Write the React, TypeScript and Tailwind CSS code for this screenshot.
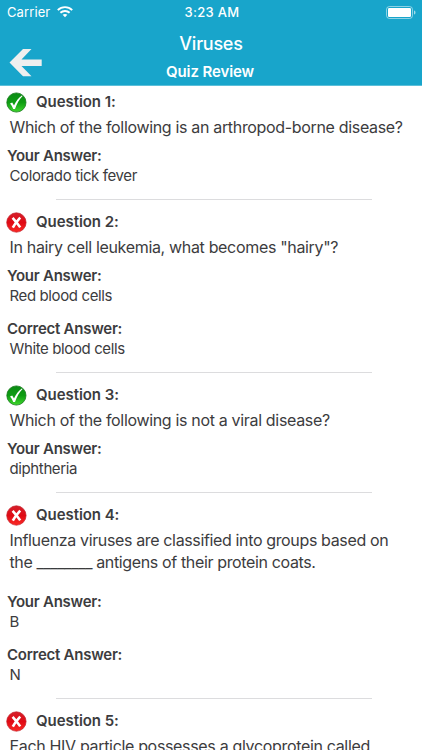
interface ReviewItem {
  id: number;
  text: string[];
  correct: boolean;
  answer?: string;
  correctAnswer?: string;
}

const items: ReviewItem[] = [
  {
    id: 1,
    text: ["Which of the following is an arthropod-borne disease?"],
    correct: true,
    answer: "Colorado tick fever",
  },
  {
    id: 2,
    text: ['In hairy cell leukemia, what becomes "hairy"?'],
    correct: false,
    answer: "Red blood cells",
    correctAnswer: "White blood cells",
  },
  {
    id: 3,
    text: ["Which of the following is not a viral disease?"],
    correct: true,
    answer: "diphtheria",
  },
  {
    id: 4,
    text: [
      "Influenza viruses are classified into groups based on",
      "the ________ antigens of their protein coats.",
    ],
    correct: false,
    answer: "B",
    correctAnswer: "N",
  },
  {
    id: 5,
    text: ["Each HIV particle possesses a glycoprotein called"],
    correct: false,
  },
];

export default function App() {
  return (
    <div className="flex h-[750px] w-[422px] flex-col overflow-hidden bg-white font-['Inter',sans-serif] text-[#3c3c3e]">
      <Header />
      <main className="min-h-0 flex-1 overflow-hidden pt-1">
        {items.map((item) => (
          <ReviewBlock key={item.id} item={item} />
        ))}
      </main>
    </div>
  );
}

function Header() {
  return (
    <header className="h-[86px] shrink-0 border-b border-[#5cbfd9] bg-[#18a5cb] text-white">
      <div className="grid h-6 grid-cols-3 items-center pr-[6px] pl-[7px] text-[13px]">
        <div className="flex items-center gap-[7px]">
          <span className="pt-px tracking-[0.1px]">Carrier</span>
          <WifiIcon />
        </div>
        <span className="pt-px pl-px text-center font-medium tracking-[0.3px]">3:23 AM</span>
        <div className="flex justify-end">
          <BatteryIcon />
        </div>
      </div>
      <div className="grid grid-cols-[60px_1fr_60px] items-start">
        <button className="pt-6 pl-[9px]" aria-label="Back">
          <BackArrow />
        </button>
        <div className="pt-[6px] text-center">
          <h1 className="text-[18px] leading-[27px] font-medium tracking-[-0.25px]">Viruses</h1>
          <h2 className="pr-[2px] text-[15px] leading-[29px] font-semibold tracking-[-0.1px]">
            Quiz Review
          </h2>
        </div>
      </div>
    </header>
  );
}

function ReviewBlock({ item }: { item: ReviewItem }) {
  return (
    <section>
      <div className="flex h-6 items-center gap-[9px] pl-[6px]">
        {item.correct ? <CorrectIcon /> : <WrongIcon />}
        <h3 className="text-[15px] font-semibold tracking-[-0.06px] whitespace-nowrap">
          Question {item.id}:
        </h3>
      </div>
      <div
        className={`mt-[2px] pl-[9.5px] text-[16px] whitespace-nowrap ${item.text.length > 1 ? "mb-[19px] leading-[22px] tracking-[-0.36px]" : "mb-[7px] leading-[23px] tracking-[-0.33px]"}`}
      >
        {item.text.map((line) => (
          <p key={line}>{line}</p>
        ))}
      </div>
      {item.answer && <Answer label="Your Answer:" value={item.answer} />}
      {item.correctAnswer && (
        <Answer label="Correct Answer:" value={item.correctAnswer} />
      )}
      <div className="mr-[50px] mb-[10px] ml-[56px] h-px bg-[#dcdcde]" />
    </section>
  );
}

function Answer({ label, value }: { label: string; value: string }) {
  return (
    <div className="pb-[13px] text-[15px] leading-5">
      <p className="pl-[7px] font-semibold tracking-[-0.25px]">{label}</p>
      <p className="pl-[9.5px] tracking-[-0.38px]">{value}</p>
    </div>
  );
}

function CorrectIcon() {
  return (
    <svg width="21" height="21" viewBox="0 0 21 21">
      <defs>
        <linearGradient id="green" x1="0" y1="0" x2="0" y2="1">
          <stop offset="0" stopColor="#0b8a14" />
          <stop offset="0.5" stopColor="#0e9d12" />
          <stop offset="1" stopColor="#3fd62c" />
        </linearGradient>
      </defs>
      <circle cx="10.4" cy="10.5" r="9.6" fill="url(#green)" stroke="#177a1c" strokeWidth="0.8" />
      <path d="M4 11.4L6.2 10.6L8 13.6C10 9.2 12.4 5.8 15.8 3.4L16.6 4.1C13.2 7.6 10.8 11.8 9 17H7.2C6.4 14.8 5.4 13 4 11.4Z" fill="#fff" />
    </svg>
  );
}

function WrongIcon() {
  return (
    <svg width="21" height="21" viewBox="0 0 21 21">
      <defs>
        <linearGradient id="red" x1="0" y1="0" x2="0" y2="1">
          <stop offset="0" stopColor="#d5202b" />
          <stop offset="0.5" stopColor="#e00a14" />
          <stop offset="1" stopColor="#fb2a25" />
        </linearGradient>
      </defs>
      <circle cx="10.4" cy="10.5" r="9.7" fill="url(#red)" stroke="#c4202a" strokeWidth="0.7" />
      <path d="M6.6 5.8C8.6 8 11.8 11.8 14.2 15.4M14.2 5.6C11.6 8.4 8.8 11.8 6.8 15.6" fill="none" stroke="#fff" strokeWidth="2.6" />
    </svg>
  );
}

function BackArrow() {
  return (
    <svg width="33" height="29" viewBox="0 0 33 29">
      <path d="M0.5 14.5L14 1H22.5L12.5 11.5H32.7V18H12.5L22.5 28.2H14Z" fill="#efefef" />
    </svg>
  );
}

function WifiIcon() {
  return (
    <svg width="16" height="12" viewBox="0 0 16 12" fill="none" stroke="#fff" strokeWidth="1.9">
      <path d="M0.8 4.1C4.8 0.1 11.2 0.1 15.2 4.1" />
      <path d="M3.4 6.8C6 4.3 10 4.3 12.6 6.8" />
      <path d="M8 11.3L5.6 8.8C7 7.6 9 7.6 10.4 8.8Z" fill="#fff" stroke="none" />
    </svg>
  );
}

function BatteryIcon() {
  return (
    <svg width="30" height="13" viewBox="0 0 30 13">
      <rect x="0.5" y="0.5" width="26" height="12" rx="3" fill="none" stroke="#fff" strokeOpacity="0.5" />
      <rect x="2" y="2" width="23" height="9" rx="1.2" fill="#fff" />
      <path d="M28 4.5C30 5 30 8 28 8.5Z" fill="#fff" fillOpacity="0.6" />
    </svg>
  );
}
